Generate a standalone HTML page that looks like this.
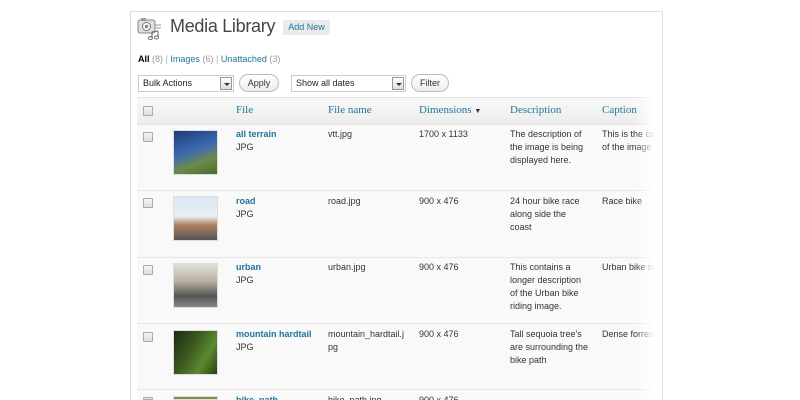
<!DOCTYPE html><html><head><style>
*{margin:0;padding:0;box-sizing:border-box}
html{width:800px;height:400px;overflow:hidden}
body{width:800px;height:400px;background:#fff;font-family:"Liberation Sans",sans-serif;font-size:9px;color:#333;position:relative;overflow:hidden}
.a{position:absolute;white-space:nowrap}
.frame{position:absolute;left:130px;top:11px;width:533px;height:389px;border:1px solid #ddd;border-bottom:none}
.cb{position:absolute;width:10px;height:10px;border:1px solid #aaa;background:linear-gradient(#f4f4f4,#ddd);border-radius:1px}
.th{font-family:"Liberation Serif",serif;font-size:11px;color:#21759b}
.lk{color:#21759b;font-weight:bold}
.row{position:absolute;left:137px;width:520px;height:67px;background:#f9f9f9;border-top:1px solid #e6e6e6}
.thumb{position:absolute;left:173px;width:45px;height:45px;border:1px solid #ddd}
.btn{position:absolute;height:18px;border:1px solid #bbb;border-radius:10px;background:linear-gradient(#fff,#ededed);font-size:9px;color:#333;text-align:center;line-height:16px}
.sel{position:absolute;height:17px;border:1px solid #ccc;background:#fff;font-size:9px;line-height:15px;padding-left:4px;color:#222}
.sel i{position:absolute;right:1px;top:1px;width:12px;height:13px;border:1px solid #999;background:linear-gradient(#fff,#ddd)}
.sel i:after{content:"";position:absolute;left:3px;top:5px;border:3px solid transparent;border-top:3px solid #333}
.d{line-height:13px}
.clip{position:absolute;left:0;top:0;width:657px;height:400px;overflow:hidden}
</style></head><body>
<div class="frame"></div>
<svg class="a" style="left:137px;top:17px" width="26" height="24" viewBox="0 0 26 24"><rect x="1" y="3" width="17" height="13" rx="2" fill="#ddd" stroke="#888"/><circle cx="9.5" cy="9.5" r="4" fill="#fff" stroke="#777"/><circle cx="9.5" cy="9.5" r="1.8" fill="#888"/><rect x="4" y="1" width="5" height="3" fill="#999"/><path d="M18 8h6M18 11h6" stroke="#999"/><path d="M15 15v6M21 14v6" stroke="#666"/><ellipse cx="13.5" cy="21" rx="2" ry="1.5" fill="none" stroke="#666"/><ellipse cx="19.5" cy="20.5" rx="2" ry="1.5" fill="none" stroke="#666"/><path d="M15 15l6-1" stroke="#666"/></svg>
<div class="a" style="left:170px;top:16px;font-size:18px;letter-spacing:-0.3px;color:#464646">Media Library</div>
<div class="a" style="left:283px;top:20px;height:15px;width:47px;background:#eaeaea;border-radius:2px;color:#21759b;font-size:9px;line-height:15px;text-align:center">Add New</div>
<div class="a" style="left:138px;top:54px"><b style="color:#000">All</b> <span style="color:#999">(8)</span> <span style="color:#aaa">|</span> <span style="color:#21759b">Images</span> <span style="color:#999">(6)</span> <span style="color:#aaa">|</span> <span style="color:#21759b">Unattached</span> <span style="color:#999">(3)</span></div>
<div class="sel" style="left:138px;top:75px;width:96px">Bulk Actions<i></i></div>
<div class="btn" style="left:239px;top:74px;width:40px">Apply</div>
<div class="sel" style="left:291px;top:75px;width:115px">Show all dates<i></i></div>
<div class="btn" style="left:411px;top:74px;width:38px">Filter</div>
<div class="clip">
<div class="a" style="left:137px;top:97px;width:520px;height:27px;background:linear-gradient(#f9f9f9,#ececec);border-top:1px solid #e3e3e3"></div>
<div class="cb" style="left:143px;top:106px"></div>
<div class="a th" style="left:236px;top:104px">File</div>
<div class="a th" style="left:328px;top:104px">File name</div>
<div class="a th" style="left:419px;top:104px">Dimensions <span style="font-size:7px;color:#333">▼</span></div>
<div class="a th" style="left:510px;top:104px">Description</div>
<div class="a th" style="left:602px;top:104px">Caption</div>

<div class="row" style="top:124px"></div>
<div class="row" style="top:190px"></div>
<div class="row" style="top:257px"></div>
<div class="row" style="top:323px"></div>
<div class="row" style="top:389px;height:11px"></div>

<div class="cb" style="left:143px;top:132px"></div>
<div class="thumb" style="top:130px;background:linear-gradient(160deg,#1c3a78 0%,#3d6bb0 45%,#6d8a4a 70%,#4a6a2a 100%)"></div>
<div class="a d" style="left:236px;top:128px"><span class="lk">all terrain</span><br>JPG</div>
<div class="a d" style="left:328px;top:128px">vtt.jpg</div>
<div class="a d" style="left:419px;top:128px">1700 x 1133</div>
<div class="a d" style="left:510px;top:128px">The description of<br>the image is being<br>displayed here.</div>
<div class="a d" style="left:602px;top:128px">This is the cap<br>of the image</div>

<div class="cb" style="left:143px;top:198px"></div>
<div class="thumb" style="top:196px;background:linear-gradient(180deg,#dce8f4 0%,#e8eef2 45%,#b08060 65%,#555 100%)"></div>
<div class="a d" style="left:236px;top:195px"><span class="lk">road</span><br>JPG</div>
<div class="a d" style="left:328px;top:195px">road.jpg</div>
<div class="a d" style="left:419px;top:195px">900 x 476</div>
<div class="a d" style="left:510px;top:195px">24 hour bike race<br>along side the<br>coast</div>
<div class="a d" style="left:602px;top:195px">Race bike</div>

<div class="cb" style="left:143px;top:265px"></div>
<div class="thumb" style="top:263px;background:linear-gradient(180deg,#e0e0d8 0%,#b8b0a0 40%,#555 75%,#888 100%)"></div>
<div class="a d" style="left:236px;top:261px"><span class="lk">urban</span><br>JPG</div>
<div class="a d" style="left:328px;top:261px">urban.jpg</div>
<div class="a d" style="left:419px;top:261px">900 x 476</div>
<div class="a d" style="left:510px;top:261px">This contains a<br>longer description<br>of the Urban bike<br>riding image.</div>
<div class="a d" style="left:602px;top:261px">Urban bike rid</div>

<div class="cb" style="left:143px;top:332px"></div>
<div class="thumb" style="top:330px;background:linear-gradient(120deg,#1a2a10 0%,#3d5a20 40%,#5a8a30 70%,#2a4010 100%)"></div>
<div class="a d" style="left:236px;top:328px"><span class="lk">mountain hardtail</span><br>JPG</div>
<div class="a d" style="left:328px;top:328px">mountain_hardtail.j<br>pg</div>
<div class="a d" style="left:419px;top:328px">900 x 476</div>
<div class="a d" style="left:510px;top:328px">Tall sequoia tree's<br>are surrounding the<br>bike path</div>
<div class="a d" style="left:602px;top:328px">Dense forrest</div>

<div class="cb" style="left:143px;top:397px;height:3px"></div>
<div class="thumb" style="top:396px;height:4px;background:#8a8a40"></div>
<div class="a d" style="left:236px;top:394px;height:6px;overflow:hidden"><span class="lk">bike_path</span></div>
<div class="a d" style="left:328px;top:394px;height:6px;overflow:hidden">bike_path.jpg</div>
<div class="a d" style="left:419px;top:394px;height:6px;overflow:hidden">900 x 476</div>
<div class="a" style="left:635px;top:97px;width:22px;height:303px;background:linear-gradient(90deg,rgba(255,255,255,0),#fff 90%)"></div>
</div>
</body></html>
